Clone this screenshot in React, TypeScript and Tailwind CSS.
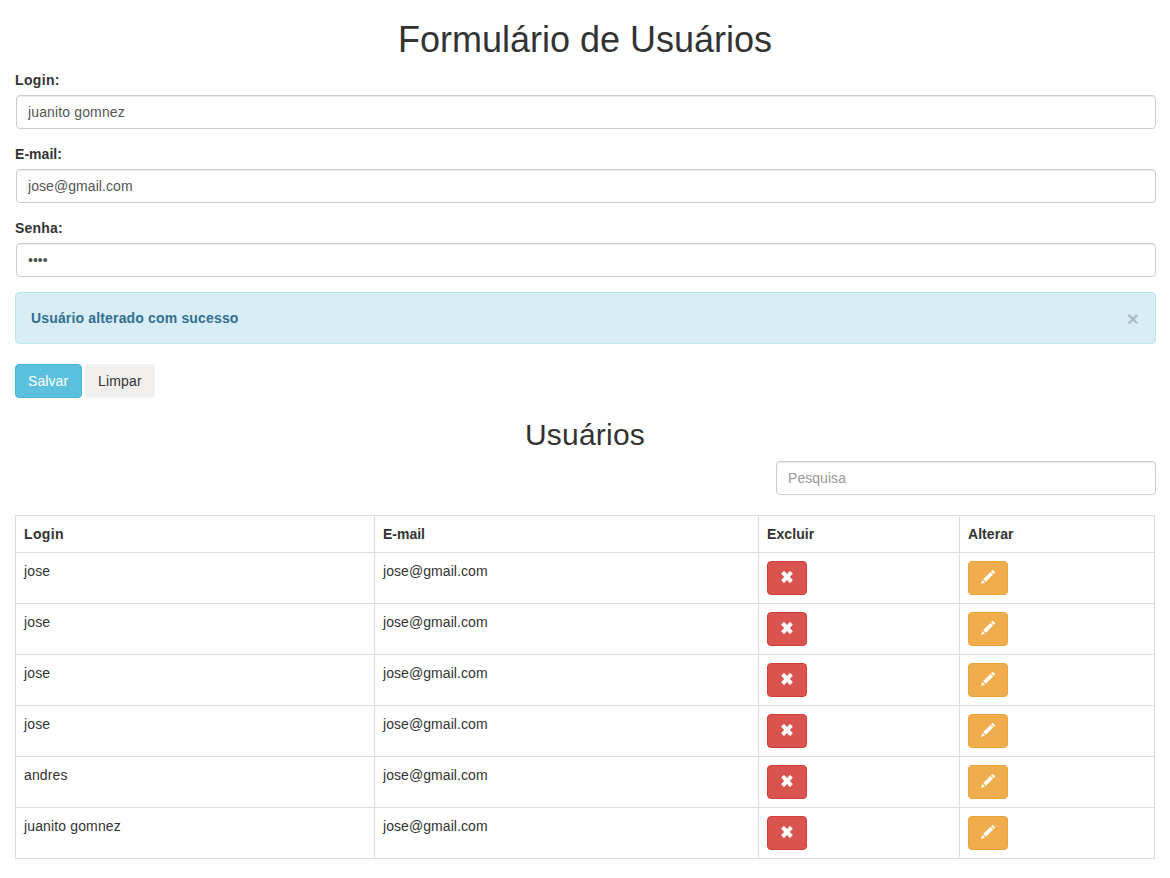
import React from "react";

const users = [
  { login: "jose", email: "jose@gmail.com" },
  { login: "jose", email: "jose@gmail.com" },
  { login: "jose", email: "jose@gmail.com" },
  { login: "jose", email: "jose@gmail.com" },
  { login: "andres", email: "jose@gmail.com" },
  { login: "juanito gomnez", email: "jose@gmail.com" },
];

const inputClass =
  "block h-[34px] rounded border border-[#ccc] bg-white px-[11px] py-1.5 text-sm leading-5 text-[#555] shadow-[inset_0_1px_1px_rgba(0,0,0,0.075)] outline-none placeholder:text-[#999]";

type FieldProps = { label: string; type?: string; value: string; labelSpacing?: string; valueSpacing?: string };

function Field({ label, type = "text", value, labelSpacing = "", valueSpacing = "" }: FieldProps) {
  return (
    <div className="mb-[15px]">
      <label className={`mb-[5px] block font-bold ${labelSpacing}`}>{label}</label>
      <input type={type} defaultValue={value} className={`${inputClass} ml-px w-full ${valueSpacing}`} />
    </div>
  );
}

function RemoveIcon() {
  return (
    <svg className="mb-0.5" width="14" height="14" viewBox="0 0 14 14" fill="#fff">
      <path d="M3.6 1.2Q4 .8 4.4 1.2L7 3.9 9.6 1.2Q10 .8 10.4 1.2L12.5 3.3Q12.9 3.7 12.5 4.1L9.8 7 12.5 9.8Q12.9 10.2 12.5 10.6L10.4 12.7Q10 13.1 9.6 12.7L7 10 4.4 12.7Q4 13.1 3.6 12.7L1.5 10.6Q1.1 10.2 1.5 9.8L4.2 7 1.5 4.1Q1.1 3.7 1.5 3.3Z" />
    </svg>
  );
}

function PencilIcon() {
  return (
    <svg className="mb-0.5" width="14" height="14" viewBox="0 0 14 14" fill="#fff">
      <path d="M11 .3Q11.6-.3 12.2.3L13.7 1.8Q14.3 2.4 13.7 3L12.7 4 10 1.3ZM9.4 1.9 12.1 4.6 4.9 11.8 2.2 9.1ZM1.4 9.9 4.1 12.6 0 14Z" />
    </svg>
  );
}

export default function App() {
  return (
    <div className="min-h-[878px] bg-white px-[15px] pt-5 font-['Liberation_Sans',Arial,sans-serif] text-sm leading-5 text-[#333]">
      <h1 className="mb-[10px] text-center text-[36px] leading-[40px] font-medium">Formulário de Usuários</h1>
      <form>
        <Field label="Login:" value="juanito gomnez" labelSpacing="tracking-[0.35px]" valueSpacing="tracking-[0.14px]" />
        <Field label="E-mail:" value="jose@gmail.com" labelSpacing="tracking-[0.05px]" valueSpacing="tracking-[0.07px]" />
        <Field label="Senha:" type="password" value="1234" labelSpacing="tracking-[0.2px]" />
        <div className="-mr-px mb-5 flex h-[52px] items-center justify-between rounded border border-[#bce8f1] bg-[#d9edf7] pr-4 pl-[15px] text-[#31708f]">
          <strong className="tracking-[0.16px]">Usuário alterado com sucesso</strong>
          <button type="button" className="text-[21px] leading-[21px] font-bold text-black opacity-20">×</button>
        </div>
        <div className="flex gap-[3px]">
          <button type="button" className="h-[34px] w-[67px] rounded border border-[#46b8da] bg-[#5bc0de] pl-[12px] text-left tracking-[0.08px] text-white">Salvar</button>
          <button type="button" className="h-[34px] w-[70px] rounded bg-[#f2f0ef] pl-[13px] text-left tracking-[0.15px] text-[#333]">Limpar</button>
        </div>
      </form>
      <h2 className="mt-5 mb-[10px] text-center text-[30px] leading-[33px] font-medium tracking-[0.2px]">Usuários</h2>
      <div className="-mr-px mb-5 flex justify-end">
        <input type="text" placeholder="Pesquisa" className={`${inputClass} w-[380px] tracking-[0.05px]`} />
      </div>
      <table className="w-full table-fixed border-collapse border border-[#ddd] text-left">
        <colgroup>
          <col className="w-[359px]" />
          <col className="w-[384px]" />
          <col className="w-[201px]" />
          <col className="w-[195px]" />
        </colgroup>
        <thead>
          <tr className="h-[37px]">
            <th className="border border-[#ddd] p-2 font-bold tracking-[0.35px]">Login</th>
            <th className="border border-[#ddd] p-2 font-bold">E-mail</th>
            <th className="border border-[#ddd] p-2 font-bold tracking-[0.1px]">Excluir</th>
            <th className="border border-[#ddd] p-2 font-bold tracking-[0.05px]">Alterar</th>
          </tr>
        </thead>
        <tbody>
          {users.map((user, index) => (
            <tr key={index} className="h-[51px]">
              <td className="border border-[#ddd] p-2 align-top tracking-[0.14px]">{user.login}</td>
              <td className="border border-[#ddd] p-2 align-top tracking-[0.07px]">{user.email}</td>
              <td className="border border-[#ddd] p-2 align-top">
                <button type="button" aria-label="Excluir" className="flex h-[34px] w-10 items-center justify-center rounded border border-[#d43f3a] bg-[#d9534f]">
                  <RemoveIcon />
                </button>
              </td>
              <td className="border border-[#ddd] p-2 align-top">
                <button type="button" aria-label="Alterar" className="flex h-[34px] w-10 items-center justify-center rounded border border-[#eea236] bg-[#f0ad4e]">
                  <PencilIcon />
                </button>
              </td>
            </tr>
          ))}
        </tbody>
      </table>
    </div>
  );
}
